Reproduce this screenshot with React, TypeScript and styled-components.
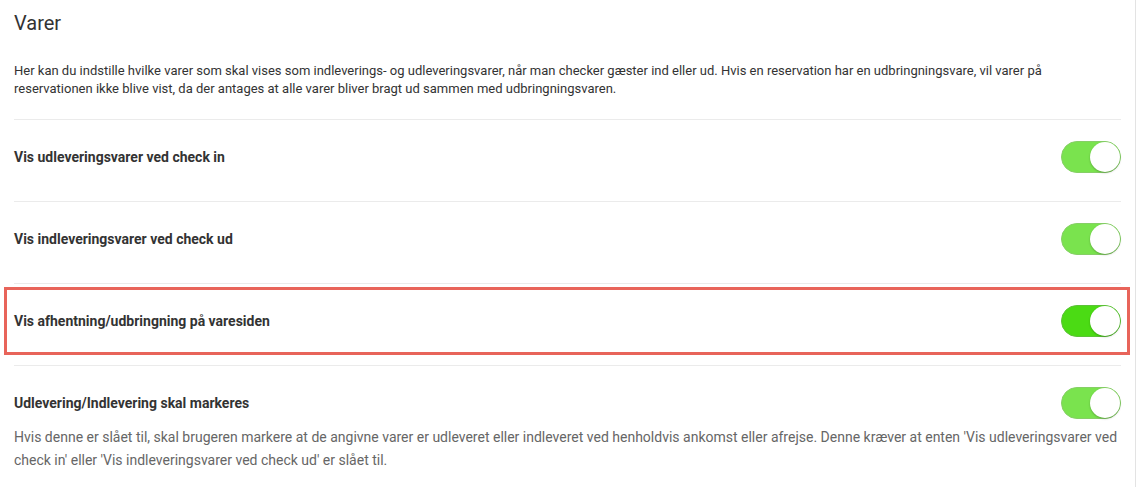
import React from "react";
import styled, { createGlobalStyle } from "styled-components";

const GlobalStyle = createGlobalStyle`
  html, body {
    margin: 0;
    padding: 0;
    background: #ffffff;
  }
  body {
    font-family: Roboto, "Liberation Sans", Arial, sans-serif;
    color: #333333;
  }
`;

const Panel = styled.div`
  width: 1136px;
  min-height: 487px;
  box-sizing: border-box;
  border-right: 1px solid #e3e3e3;
  padding: 10px 14px 0 14px;
`;

const Title = styled.h2`
  margin: 0;
  font-size: 20px;
  font-weight: 400;
  line-height: 26px;
  color: #333333;
`;

const Intro = styled.p`
  margin: 26px 0 21px 0;
  font-size: 13px;
  line-height: 18px;
  color: #333333;
`;

const SettingRow = styled.div<{ $highlight?: boolean }>`
  position: relative;
  border-top: 1px solid #ebebeb;
  padding: 21px 0 28px 0;
  &::after {
    content: "";
    display: ${(p) => (p.$highlight ? "block" : "none")};
    position: absolute;
    top: 3px;
    bottom: 10px;
    left: -10px;
    right: -9px;
    border: 3px solid #e8645a;
    pointer-events: none;
  }
`;

const RowHead = styled.div`
  display: flex;
  align-items: center;
  justify-content: space-between;
`;

const Label = styled.span`
  font-size: 14px;
  font-weight: 700;
  color: #333333;
`;

const Description = styled.p`
  margin: 7px 0 0 0;
  font-size: 14px;
  line-height: 23px;
  color: #666666;
`;

const Toggle = styled.span<{ $bright?: boolean }>`
  position: relative;
  display: inline-block;
  width: 60px;
  height: 32px;
  box-sizing: border-box;
  border-radius: 16px;
  background: ${(p) => (p.$bright ? "#4bdb14" : "#7ae34e")};
  border: 1px solid ${(p) => (p.$bright ? "#5cc238" : "#86cf66")};
`;

const Knob = styled.span`
  position: absolute;
  top: 0;
  right: 0;
  width: 30px;
  height: 30px;
  border-radius: 50%;
  background: #ffffff;
  box-shadow: 0 1px 2px rgba(0, 0, 0, 0.25);
`;

type Setting = {
  label: string;
  description?: string;
  highlight?: boolean;
};

const settings: Setting[] = [
  { label: "Vis udleveringsvarer ved check in" },
  { label: "Vis indleveringsvarer ved check ud" },
  { label: "Vis afhentning/udbringning på varesiden", highlight: true },
  {
    label: "Udlevering/Indlevering skal markeres",
    description:
      "Hvis denne er slået til, skal brugeren markere at de angivne varer er udleveret eller indleveret ved henholdvis ankomst eller afrejse. Denne kræver at enten 'Vis udleveringsvarer ved check in' eller 'Vis indleveringsvarer ved check ud' er slået til.",
  },
];

export default function App() {
  return (
    <>
      <GlobalStyle />
      <Panel>
        <Title>Varer</Title>
        <Intro>
          Her kan du indstille hvilke varer som skal vises som indleverings- og
          udleveringsvarer, når man checker gæster ind eller ud. Hvis en
          reservation har en udbringningsvare, vil varer på reservationen ikke
          blive vist, da der antages at alle varer bliver bragt ud sammen med
          udbringningsvaren.
        </Intro>
        {settings.map((s) => (
          <SettingRow key={s.label} $highlight={s.highlight}>
            <RowHead>
              <Label>{s.label}</Label>
              <Toggle $bright={s.highlight}>
                <Knob />
              </Toggle>
            </RowHead>
            {s.description && <Description>{s.description}</Description>}
          </SettingRow>
        ))}
      </Panel>
    </>
  );
}
